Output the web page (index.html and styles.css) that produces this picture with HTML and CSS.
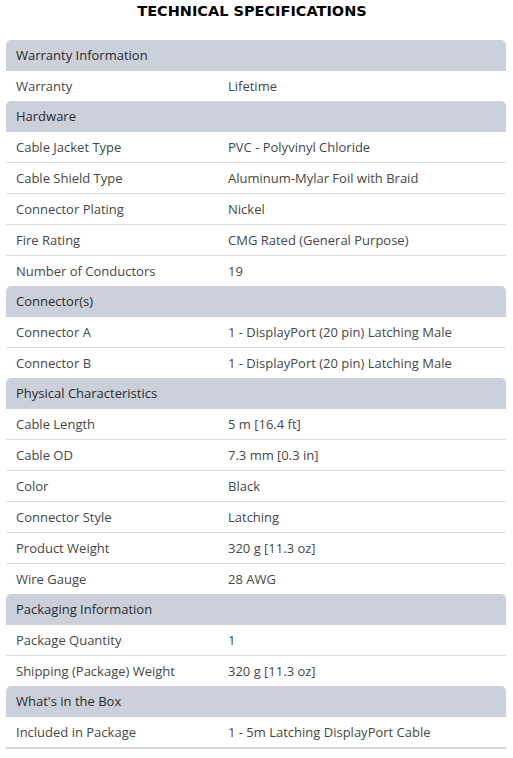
FILE: index.html
```html
<!DOCTYPE html>
<html>
<head>
<meta charset="utf-8">
<link rel="stylesheet" href="styles.css">
</head>
<body>
<div class="page">
  <h1 class="title">TECHNICAL SPECIFICATIONS</h1>
  <div class="specs">
    <section class="group">
      <div class="group-head">Warranty Information</div>
      <div class="row"><span class="label">Warranty</span><span class="value">Lifetime</span></div>
    </section>
    <section class="group">
      <div class="group-head">Hardware</div>
      <div class="row"><span class="label">Cable Jacket Type</span><span class="value">PVC - Polyvinyl Chloride</span></div>
      <div class="row"><span class="label">Cable Shield Type</span><span class="value">Aluminum-Mylar Foil with Braid</span></div>
      <div class="row"><span class="label">Connector Plating</span><span class="value">Nickel</span></div>
      <div class="row"><span class="label">Fire Rating</span><span class="value">CMG Rated (General Purpose)</span></div>
      <div class="row"><span class="label">Number of Conductors</span><span class="value">19</span></div>
    </section>
    <section class="group">
      <div class="group-head">Connector(s)</div>
      <div class="row"><span class="label">Connector A</span><span class="value">1 - DisplayPort (20 pin) Latching Male</span></div>
      <div class="row"><span class="label">Connector B</span><span class="value">1 - DisplayPort (20 pin) Latching Male</span></div>
    </section>
    <section class="group">
      <div class="group-head">Physical Characteristics</div>
      <div class="row"><span class="label">Cable Length</span><span class="value">5 m [16.4 ft]</span></div>
      <div class="row"><span class="label">Cable OD</span><span class="value">7.3 mm [0.3 in]</span></div>
      <div class="row"><span class="label">Color</span><span class="value">Black</span></div>
      <div class="row"><span class="label">Connector Style</span><span class="value">Latching</span></div>
      <div class="row"><span class="label">Product Weight</span><span class="value">320 g [11.3 oz]</span></div>
      <div class="row"><span class="label">Wire Gauge</span><span class="value">28 AWG</span></div>
    </section>
    <section class="group">
      <div class="group-head">Packaging Information</div>
      <div class="row"><span class="label">Package Quantity</span><span class="value">1</span></div>
      <div class="row"><span class="label">Shipping (Package) Weight</span><span class="value">320 g [11.3 oz]</span></div>
    </section>
    <section class="group last">
      <div class="group-head">What's in the Box</div>
      <div class="row"><span class="label">Included in Package</span><span class="value">1 - 5m Latching DisplayPort Cable</span></div>
    </section>
  </div>
</div>
</body>
</html>
```
FILE: styles.css
```css
html, body {
  margin: 0;
  padding: 0;
  background: #ffffff;
}

.page {
  width: 500px;
  margin-left: 6px;
  font-family: "Open Sans", "Liberation Sans", sans-serif;
}

.title {
  margin: 0;
  height: 40px;
  box-sizing: border-box;
  padding-top: 1px;
  padding-right: 8px;
  line-height: 20px;
  text-align: center;
  font-family: "DejaVu Sans", Verdana, sans-serif;
  font-size: 14.5px;
  font-weight: bold;
  color: #000;
}

.specs {
  display: flex;
  flex-direction: column;
}

.group {
  display: flex;
  flex-direction: column;
}

.group-head {
  height: 31px;
  line-height: 31px;
  padding-left: 10px;
  background: #cbd0db;
  border-radius: 5px 5px 0 0;
  font-size: 13px;
  color: #2b2b2b;
}

.row {
  display: flex;
  height: 30px;
  align-items: center;
  font-size: 13px;
  color: #474747;
}

.row + .row {
  border-top: 1px solid #dcdcdc;
}

.last .row:last-child {
  border-bottom: 2px solid #d9d9d9;
}

.label {
  width: 212px;
  padding-left: 10px;
  flex-shrink: 0;
}

.value {
  flex: 1;
}
```
